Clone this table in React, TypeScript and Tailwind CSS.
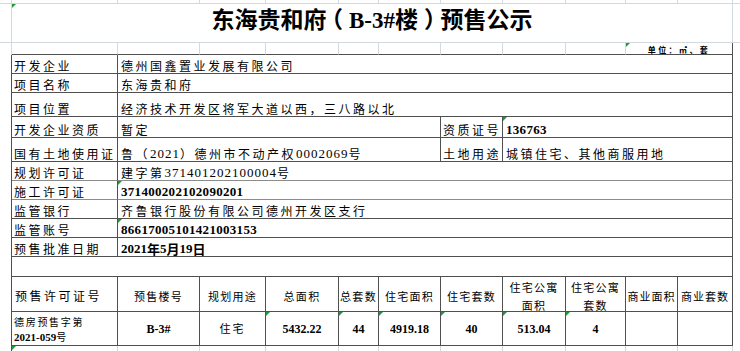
import React from "react";

const DK = "border-[#505050]";
const LT = "border-[#d4d8e0]";

const lightCell = `border-r border-b ${LT}`;
const gutter = `border-r ${DK}`;
const base = `relative flex overflow-hidden whitespace-nowrap border-r border-b ${DK}`;
const labelCls = `${base} items-end pl-[2px] pb-[1px] text-[12px] leading-[12px] tracking-[2.5px]`;
const valueCls = `${base} items-end pl-[3px] pb-[1px] text-[12px] leading-[12px] tracking-[2.5px]`;
const serifReg = "font-['Liberation_Serif','Noto_Sans_CJK_SC',serif] text-[13px] tracking-[1px]";
const serifBold = "font-['Liberation_Serif','Noto_Sans_CJK_SC',serif] font-bold text-[13px] tracking-[0.3px]";
const headCls = `${base} items-center justify-center pt-[4px] text-[11px] leading-[18px] tracking-[1.3px] text-center`;
const dataCls = `${base} items-center justify-center font-['Liberation_Serif','Noto_Sans_CJK_SC',serif] font-bold text-[12px] leading-[14px]`;

function Tri() {
  return (
    <span className="absolute left-0 top-0 h-0 w-0 border-t-[4px] border-r-[4px] border-t-[#1e9a3e] border-r-transparent" />
  );
}

function LightRow() {
  return (
    <>
      <div className={lightCell} />
      <div className={lightCell} />
      <div className={lightCell} />
      <div className={lightCell} />
      <div className={lightCell} />
      <div className={lightCell} />
      <div className={lightCell} />
      <div className={lightCell} />
      <div className={lightCell} />
      <div className={lightCell} />
      <div className={lightCell} />
      <div className={lightCell} />
      <div className={`border-b ${LT}`} />
    </>
  );
}

function InfoRow({ label, children, tri, lighter }: { label: string; children: React.ReactNode; tri?: boolean; lighter?: boolean }) {
  return (
    <>
      <div className={gutter} />
      <div className={`${labelCls} ${lighter ? "border-b-[#8c8c8c]" : ""}`}>{label}</div>
      <div className={`${valueCls} col-span-10 ${lighter ? "border-b-[#8c8c8c]" : ""}`}>
        {tri && <Tri />}
        {children}
      </div>
      <div />
    </>
  );
}

export default function App() {
  return (
    <div className="w-[740px] h-[351px] overflow-hidden bg-white text-black font-['Noto_Sans_CJK_SC','Noto_Sans',sans-serif]">
      <div className="grid grid-cols-[12px_106px_82px_66px_73px_40px_62px_62px_63px_60px_52px_55px_7px] grid-rows-[4px_39px_12px_19px_19px_24px_21px_24px_19px_19px_19px_19px_19px_20px_35px_34px_5px]">
        {/* row 1 */}
        <LightRow />

        {/* row 2: title */}
        <div className={lightCell} />
        <div className={`relative col-span-11 flex items-start justify-center pt-[3px] ${lightCell}`}>
          <Tri />
          <span className="text-[23px] leading-[23px] font-bold">
            东海贵和府<span className="[font-feature-settings:'halt'] ml-[5px] mr-[6px]">（</span>
            <span className="font-['Liberation_Serif',serif]">B-3#</span>楼
            <span className="[font-feature-settings:'halt'] ml-[6px] mr-[5px]">）</span>预售公示
          </span>
        </div>
        <div className={`border-b ${LT}`} />

        {/* row 3: unit */}
        <div className={`border-r ${LT}`} />
        <div className={`border-r border-b ${LT} border-b-[#505050]`} />
        <div className={`border-r border-b ${LT} border-b-[#505050]`} />
        <div className={`border-r border-b ${LT} border-b-[#505050]`} />
        <div className={`border-r border-b ${LT} border-b-[#505050]`} />
        <div className={`border-r border-b ${LT} border-b-[#505050]`} />
        <div className={`border-r border-b ${LT} border-b-[#505050]`} />
        <div className={`border-r border-b ${LT} border-b-[#505050]`} />
        <div className={`border-r border-b ${LT} border-b-[#505050]`} />
        <div className={`border-r border-b ${LT} border-b-[#505050]`} />
        <div className={`relative col-span-2 flex items-center justify-center pt-[2px] border-r border-b ${LT} border-b-[#505050] border-r-[#505050]`}>
          <Tri />
          <span className="text-[8px] leading-[8px] font-bold tracking-[2.4px]">单位：㎡、套</span>
        </div>
        <div />

        {/* info rows */}
        <InfoRow label="开发企业">德州国鑫置业发展有限公司</InfoRow>
        <InfoRow label="项目名称">东海贵和府</InfoRow>
        <InfoRow label="项目位置">经济技术开发区将军大道以西，三八路以北</InfoRow>

        {/* 资质 row */}
        <div className={gutter} />
        <div className={labelCls}>开发企业资质</div>
        <div className={`${valueCls} col-span-5`}>暂定</div>
        <div className={labelCls}>资质证号</div>
        <div className={`${valueCls} col-span-4 pl-[2px]`}>
          <Tri />
          <span className={serifBold}>136763</span>
        </div>
        <div />

        {/* 国有土地 row */}
        <div className={gutter} />
        <div className={labelCls}>国有土地使用证</div>
        <div className={`${valueCls} col-span-5`}>
          <span>鲁（</span>
          <span className={serifReg}>2021</span>
          <span>）德州市不动产权</span>
          <span className={serifReg}>0002069</span>
          <span>号</span>
        </div>
        <div className={labelCls}>土地用途</div>
        <div className={`${valueCls} col-span-4 pl-[2px]`}>城镇住宅、其他商服用地</div>
        <div />

        <InfoRow label="规划许可证" lighter>
          <span>建字第</span>
          <span className={serifReg}>371401202100004</span>
          <span>号</span>
        </InfoRow>
        <InfoRow label="施工许可证" tri lighter>
          <span className={serifBold}>371400202102090201</span>
        </InfoRow>
        <InfoRow label="监管银行">齐鲁银行股份有限公司德州开发区支行</InfoRow>
        <InfoRow label="监管账号" tri>
          <span className={serifBold}>86617005101421003153</span>
        </InfoRow>
        <InfoRow label="预售批准日期">
          <span className={`${serifBold} tracking-[0px]`}>2021</span>
          <span className="font-bold text-[13px] tracking-[0px]">年</span>
          <span className={`${serifBold} tracking-[0px]`}>5</span>
          <span className="font-bold text-[13px] tracking-[0px]">月</span>
          <span className={`${serifBold} tracking-[0px]`}>19</span>
          <span className="font-bold text-[13px] tracking-[0px]">日</span>
        </InfoRow>

        {/* blank row */}
        <div className={gutter} />
        <div className={`${base} col-span-11`} />
        <div />

        {/* header row */}
        <div className={gutter} />
        <div className={`${base} items-center pl-[3px] pt-[4px] text-[12px] leading-[14px] tracking-[2.5px]`}>预售许可证号</div>
        <div className={headCls}>预售楼号</div>
        <div className={headCls}>规划用途</div>
        <div className={headCls}>总面积</div>
        <div className={`${headCls} tracking-[0.8px]`}>总套数</div>
        <div className={headCls}>住宅面积</div>
        <div className={headCls}>住宅套数</div>
        <div className={headCls}>
          <span>
            住宅公寓
            <br />
            面积
          </span>
        </div>
        <div className={headCls}>
          <span>
            住宅公寓
            <br />
            套数
          </span>
        </div>
        <div className={`${headCls} tracking-[1px]`}>商业面积</div>
        <div className={`${headCls} tracking-[1px]`}>商业套数</div>
        <div />

        {/* data row */}
        <div className={gutter} />
        <div className={`${base} flex-col justify-center pl-[2px] pt-[1px] text-[10px] leading-[15px]`}>
          <span className="tracking-[1.7px]">德房预售字第</span>
          <span>
            <span className="font-['Liberation_Serif',serif] font-bold text-[11px]">2021-059</span>
            <span>号</span>
          </span>
        </div>
        <div className={dataCls}>B-3#</div>
        <div className={`${base} items-center justify-center font-normal text-[11px] tracking-[2px]`}>住宅</div>
        <div className={dataCls}>
          <Tri />
          5432.22
        </div>
        <div className={dataCls}>
          <Tri />
          44
        </div>
        <div className={dataCls}>
          <Tri />
          4919.18
        </div>
        <div className={dataCls}>
          <Tri />
          40
        </div>
        <div className={dataCls}>
          <Tri />
          513.04
        </div>
        <div className={dataCls}>
          <Tri />
          4
        </div>
        <div className={dataCls} />
        <div className={dataCls} />
        <div />

        {/* bottom light row */}
        <div className={`border-r ${LT} border-r-[#505050]`} />
        <div className={`relative border-r ${LT}`}>
          <Tri />
        </div>
        <div className={`border-r ${LT}`} />
        <div className={`border-r ${LT}`} />
        <div className={`border-r ${LT}`} />
        <div className={`border-r ${LT}`} />
        <div className={`border-r ${LT}`} />
        <div className={`border-r ${LT}`} />
        <div className={`border-r ${LT}`} />
        <div className={`border-r ${LT}`} />
        <div className={`border-r ${LT}`} />
        <div className={`border-r ${LT}`} />
        <div />
      </div>
    </div>
  );
}
